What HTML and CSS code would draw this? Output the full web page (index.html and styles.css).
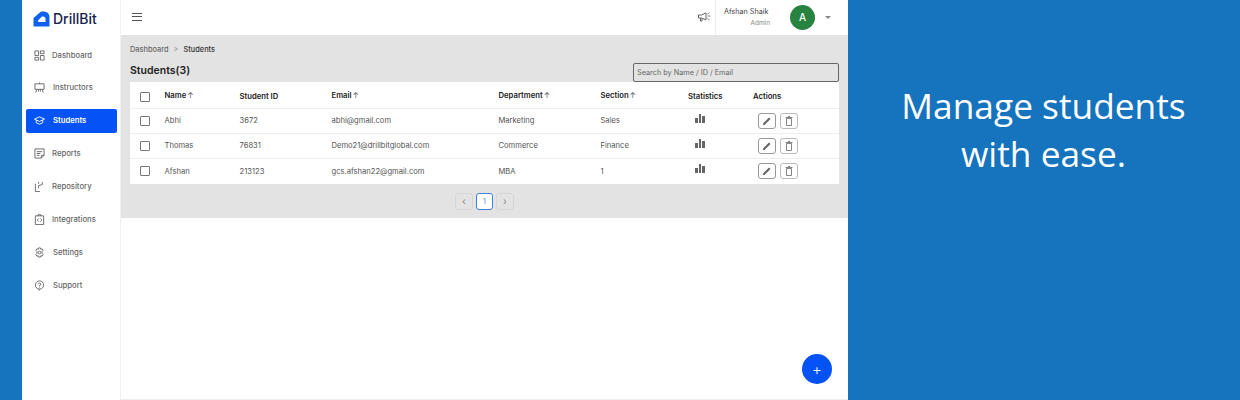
FILE: index.html
```html
<!DOCTYPE html>
<html lang="en">
<head>
    <meta charset="UTF-8">
    <title>DrillBit - Students</title>
    <link rel="stylesheet" href="styles.css">
</head>
<body>
    <div class="app">
        <aside class="sidebar">
            <div class="logo">
                <svg width="17" height="16" viewBox="0 0 17 16"><path d="M.5 7 L8 .5 H11 A5.500 5.500 0 0 1 16.500 6 V15.500 H.5 Z" fill="#0f62ee"/><path d="M5 9.500 L9 5.500 H10.500 A2.200 2.200 0 0 1 12.500 7.700 V11 H6 A1.200 1.200 0 0 1 5 9.500 Z" fill="#fff"/></svg>
                <span>DrillBit</span>
            </div>
            <nav class="nav">
                <a class="nav-item">
                    <svg viewBox="0 0 12 12"><path d="M1 1h4v5H1zM7 1h4v3H7zM7 6h4v5H7zM1 8h4v3H1z"/></svg>
                    <span class="t1">Dashboard</span>
                </a>
                <a class="nav-item">
                    <svg viewBox="0 0 12 12"><path d="M1 2h10v6H1zM6 .5V2M3 8l-1 3.500M9 8l1 3.500M5 8v2.500M7 8v2.500"/></svg>
                    <span class="t2">Instructors</span>
                </a>
                <a class="nav-item active">
                    <svg viewBox="0 0 12 12"><path d="M.5 4.500 6 2l5.500 2.500L6 7zM2.500 5.500v3L6 10l3.500-1.500v-3"/></svg>
                    <span class="t2">Students</span>
                </a>
                <a class="nav-item">
                    <svg viewBox="0 0 12 12"><path d="M1 1h10v7l-3 3H1zM3 4h6M3 6h4M3 8h3M8 11V8h3"/></svg>
                    <span class="t1">Reports</span>
                </a>
                <a class="nav-item">
                    <svg viewBox="0 0 12 12"><path d="M1.500 3v8.500h5M5 1v2M5 5v3M5 5l4-1M9 1v3"/></svg>
                    <span class="t1">Repository</span>
                </a>
                <a class="nav-item">
                    <svg viewBox="0 0 12 12"><path d="M1.500 2h9v9.500h-9zM4.500 2V.8h3V2M5 5 3.500 6.700 5 8.300M7 5l1.500 1.700L7 8.300"/></svg>
                    <span class="t1">Integrations</span>
                </a>
                <a class="nav-item">
                    <svg viewBox="0 0 12 12"><path d="M5 1h2l.4 1.500 1.500-.5 1 1.700L8.800 5v2l1.100 1.300-1 1.700-1.500-.5L7 11H5l-.4-1.500-1.500.5-1-1.700L3.200 7V5L2.100 3.700l1-1.700 1.500.5z"/><circle cx="6" cy="6" r="1.500"/></svg>
                    <span class="t2">Settings</span>
                </a>
                <a class="nav-item">
                    <svg viewBox="0 0 12 12"><circle cx="6" cy="5.500" r="4.500"/><path d="M4.700 4.500A1.300 1.300 0 1 1 6 6v1M6 8.200v.8M5 10l1 1.500"/></svg>
                    <span class="t2">Support</span>
                </a>
            </nav>
        </aside>

        <div class="content">
            <header class="topbar">
                <div class="menu-icon"><i></i><i></i><i></i></div>
                <svg class="horn" width="13" height="11" viewBox="0 0 13 11"><path d="M.5 3h3L8 .8v7L3.500 6H.5zM2.500 6v3h1.500V6.500" fill="none" stroke="#666" stroke-width="1"/><path d="M9.500 4h3M9.500 2l2-1.500M9.500 6.500l2 1.500" fill="none" stroke="#666" stroke-width=".8"/></svg>
                <div class="user">
                    <div class="user-text">
                        <div class="user-name">Afshan Shaik</div>
                        <div class="user-role">Admin</div>
                    </div>
                    <div class="avatar">A</div>
                    <div class="caret"></div>
                </div>
            </header>

            <section class="panel">
                <div class="crumbs"><span class="crumb-link">Dashboard</span><span class="crumb-sep">&gt;</span><span>Students</span></div>
                <div class="title-row">
                    <h2>Students(3)</h2>
                    <div class="search">Search by Name / ID / Email</div>
                </div>
                <table class="students">
                    <colgroup>
                        <col class="c-check"><col class="c-name"><col class="c-id"><col class="c-email"><col class="c-dept"><col class="c-sec"><col class="c-stat"><col class="c-act">
                    </colgroup>
                    <thead>
                        <tr>
                            <th><span class="check"></span></th>
                            <th class="up">Name <span class="arrow">↑</span></th>
                            <th>Student ID</th>
                            <th class="up">Email <span class="arrow">↑</span></th>
                            <th class="up">Department <span class="arrow">↑</span></th>
                            <th class="up">Section <span class="arrow">↑</span></th>
                            <th>Statistics</th>
                            <th>Actions</th>
                        </tr>
                    </thead>
                    <tbody>
                        <tr>
                            <td><span class="check"></span></td>
                            <td>Abhi</td><td>3672</td><td>abhi@gmail.com</td><td>Marketing</td><td>Sales</td>
                            <td><span class="bars"><i class="b1"></i><i class="b2"></i><i class="b3"></i></span></td>
                            <td><div class="actions">
                                <span class="act dark"><svg width="10" height="10" viewBox="0 0 10 10"><path d="M1 9V7.500L7 1.500 8.500 3l-6 6z" fill="#666"/></svg></span>
                                <span class="act"><svg width="8" height="10" viewBox="0 0 8 10"><path d="M1.500 2.500h5V9.500h-5zM.5 1.500h7M3 .5h2" fill="none" stroke="#777" stroke-width=".9"/></svg></span>
                            </div></td>
                        </tr>
                        <tr>
                            <td><span class="check"></span></td>
                            <td>Thomas</td><td>76831</td><td>Demo21@drillbitglobal.com</td><td>Commerce</td><td>Finance</td>
                            <td><span class="bars"><i class="b1"></i><i class="b2"></i><i class="b3"></i></span></td>
                            <td><div class="actions">
                                <span class="act dark"><svg width="10" height="10" viewBox="0 0 10 10"><path d="M1 9V7.500L7 1.500 8.500 3l-6 6z" fill="#666"/></svg></span>
                                <span class="act"><svg width="8" height="10" viewBox="0 0 8 10"><path d="M1.500 2.500h5V9.500h-5zM.5 1.500h7M3 .5h2" fill="none" stroke="#777" stroke-width=".9"/></svg></span>
                            </div></td>
                        </tr>
                        <tr>
                            <td><span class="check"></span></td>
                            <td>Afshan</td><td>213123</td><td>gcs.afshan22@gmail.com</td><td>MBA</td><td>1</td>
                            <td><span class="bars"><i class="b1"></i><i class="b2"></i><i class="b3"></i></span></td>
                            <td><div class="actions">
                                <span class="act dark"><svg width="10" height="10" viewBox="0 0 10 10"><path d="M1 9V7.500L7 1.500 8.500 3l-6 6z" fill="#666"/></svg></span>
                                <span class="act"><svg width="8" height="10" viewBox="0 0 8 10"><path d="M1.500 2.500h5V9.500h-5zM.5 1.500h7M3 .5h2" fill="none" stroke="#777" stroke-width=".9"/></svg></span>
                            </div></td>
                        </tr>
                    </tbody>
                </table>
                <div class="pager">
                    <span class="page off">‹</span>
                    <span class="page current">1</span>
                    <span class="page off">›</span>
                </div>
            </section>

            <button class="fab">+</button>
        </div>
    </div>

    <aside class="promo">
        <p>Manage students<br>with ease.</p>
    </aside>
</body>
</html>
```

FILE: styles.css
```css
* {
    margin: 0;
    padding: 0;
    box-sizing: border-box;
}

body {
    width: 1240px;
    height: 400px;
    overflow: hidden;
    display: flex;
    background-color: #1673be;
    padding-left: 22px;
    font-family: "Inter", "Liberation Sans", sans-serif;
    color: #444;
}

.app {
    width: 826px;
    height: 400px;
    display: flex;
    background-color: white;
}

.sidebar {
    width: 99px;
    flex-shrink: 0;
    border-right: 1px solid #f0f0f0;
}

.logo {
    display: flex;
    align-items: center;
    gap: 3px;
    height: 37px;
    padding-left: 11px;
}

.logo span {
    font-size: 14px;
    font-weight: 500;
    color: #14224d;
}

.nav {
    padding: 6px 3px 0 4px;
}

.nav-item {
    display: flex;
    align-items: center;
    height: 24px;
    margin-bottom: 8.900px;
    padding-left: 8px;
    font-size: 7.700px;
    font-weight: 500;
    color: #666;
    border-radius: 2px;
}

.nav-item svg {
    width: 11px;
    height: 11px;
    flex-shrink: 0;
    fill: none;
    stroke: #666;
    stroke-width: 1;
}

.t1 {
    margin-left: 7px;
}

.t2 {
    margin-left: 8px;
}

.nav-item.active {
    background-color: #0553f5;
    color: white;
    font-weight: 600;
}

.nav-item.active svg {
    stroke: white;
}

.content {
    flex: 1;
    min-width: 0;
    position: relative;
    border-bottom: 1px solid #eee;
}

.topbar {
    height: 35px;
    display: flex;
    align-items: center;
    padding: 0 17px 0 11px;
}

.menu-icon {
    width: 10px;
    margin-top: 1px;
}

.menu-icon i {
    display: block;
    height: 1px;
    margin-bottom: 2.500px;
    background-color: #555;
}

.horn {
    margin-left: auto;
    margin-right: 2px;
}

.user {
    display: flex;
    align-items: center;
    height: 35px;
    border-left: 1px solid #eee;
    margin-left: 2px;
    padding-left: 8px;
}

.user-text {
    width: 46px;
    font-size: 7.200px;
    margin-top: -2px;
}

.user-name {
    margin-bottom: 3px;
    white-space: nowrap;
}

.user-role {
    font-size: 6.500px;
    text-align: right;
    color: #888;
}

.avatar {
    width: 25px;
    height: 25px;
    border-radius: 50%;
    margin-left: 20px;
    background-color: #27833f;
    color: white;
    font-size: 10px;
    font-weight: 500;
    text-align: center;
    line-height: 25px;
}

.caret {
    margin-left: 10px;
    border-left: 3px solid transparent;
    border-right: 3px solid transparent;
    border-top: 3px solid #888;
}

.panel {
    height: 183px;
    background-color: #e3e3e3;
    padding: 9px 9px 0;
}

.crumbs {
    display: flex;
    align-items: center;
    height: 11px;
    font-size: 7.400px;
    font-weight: 500;
    color: #333;
}

.crumb-link {
    color: #666;
}

.crumb-sep {
    margin: 0 5px;
    color: #999;
}

.title-row {
    display: flex;
    justify-content: space-between;
    align-items: flex-end;
    height: 26px;
    margin-top: 1px;
}

.title-row h2 {
    font-size: 10.500px;
    font-weight: 600;
    color: #222;
    padding-bottom: 5px;
}

.search {
    width: 206px;
    height: 19px;
    border: 1px solid #666;
    border-radius: 2px;
    font-size: 7.300px;
    line-height: 17px;
    padding-left: 3px;
    color: #666;
}

.students {
    width: 709px;
    border-collapse: collapse;
    table-layout: fixed;
    background-color: white;
    font-size: 7.600px;
    text-align: left;
}

.c-check { width: 34.500px; }
.c-name { width: 75px; }
.c-id { width: 92px; }
.c-email { width: 167px; }
.c-dept { width: 102px; }
.c-sec { width: 87.500px; }
.c-stat { width: 65px; }
.c-act { width: 86px; }

.students th {
    height: 26px;
    padding-top: 4px;
    font-size: 7.700px;
    font-weight: 600;
    color: #222;
    border-bottom: 1px solid #eee;
}

.students th.up {
    padding-top: 2px;
}

.students td {
    height: 25.300px;
    color: #555;
    border-bottom: 1px solid #eee;
}

.students tr:last-child td {
    border-bottom: none;
}

.arrow {
    margin-left: -1px;
    color: #555;
    font-weight: 400;
}

.check {
    display: block;
    width: 10px;
    height: 10px;
    margin-left: 10px;
    border: 1.300px solid #777;
    border-radius: 1px;
}

.bars {
    display: flex;
    align-items: flex-end;
    gap: 1px;
    height: 9px;
    margin: -5px 0 0 7px;
}

.bars i {
    display: block;
    width: 2.500px;
    background-color: #666;
}

.b1 { height: 5px; }
.b2 { height: 9px; }
.b3 { height: 7px; }

.actions {
    display: flex;
    gap: 4px;
    margin-left: 5px;
}

.act {
    display: flex;
    align-items: center;
    justify-content: center;
    width: 18px;
    height: 16px;
    border: 1px solid #bbb;
    border-radius: 3px;
}

.act.dark {
    border-color: #999;
}

.pager {
    display: flex;
    justify-content: center;
    gap: 3px;
    margin-top: 9px;
}

.page {
    width: 17px;
    height: 17px;
    border-radius: 3px;
    font-size: 7px;
    line-height: 15px;
    text-align: center;
    border: 1px solid #d6d6d6;
}

.page.off {
    width: 18px;
    font-size: 10px;
    color: #888;
}

.page.current {
    border: 1.500px solid #3f7fd6;
    background-color: white;
    color: #3f7fd6;
}

.fab {
    position: absolute;
    right: 16px;
    bottom: 15px;
    width: 30px;
    height: 30px;
    border: none;
    border-radius: 50%;
    background-color: #0553f5;
    color: white;
    font-size: 15px;
    font-weight: 300;
    font-family: "Inter", sans-serif;
}

.promo {
    flex: 1;
    display: flex;
    justify-content: center;
    padding-top: 82px;
    padding-right: 1px;
    color: white;
    font-family: "Open Sans", "Liberation Sans", sans-serif;
    font-size: 35.300px;
    line-height: 47.500px;
    text-align: center;
}
```
